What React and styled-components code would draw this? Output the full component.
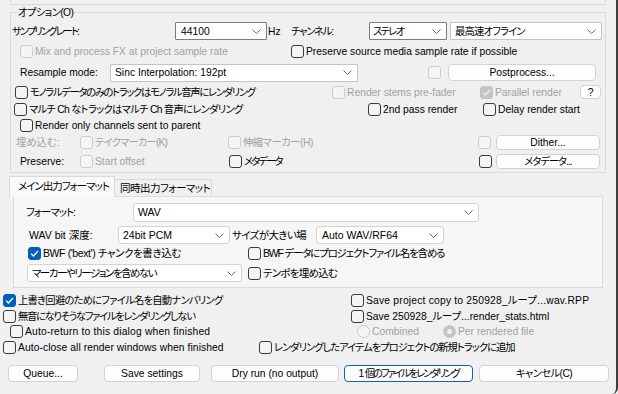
import React from "react";
import styled, { createGlobalStyle, css } from "styled-components";

const GlobalStyle = createGlobalStyle`
  html, body {
    margin: 0;
    padding: 0;
    background: #f0f0f0;
  }
  * {
    box-sizing: border-box;
  }
`;

const reaperFont = css`
  font-family: "Liberation Sans", "Noto Sans CJK JP", sans-serif;
  font-size: 10.3px;
  line-height: 13px;
`;

const winFont = css`
  font-family: "Liberation Sans", "Noto Sans CJK JP", sans-serif;
  font-size: 10.5px;
  line-height: 13px;
`;

const spacing = css`
  letter-spacing: ${(p) => p.$ls || 0}px;
`;

const Window = styled.div`
  ${reaperFont};
  font-feature-settings: "palt";
  width: 618px;
  height: 394px;
  background: #f0f0f0;
  color: #000;
  border-right: 2px solid #3d3d3d;
  border-bottom-right-radius: 6px;
  overflow: hidden;
`;

const TopStrip = styled.div`
  margin-left: 10px;
  width: 596px;
  height: 5px;
  border: 1px solid #dadada;
  border-top: none;
`;

const Group = styled.div`
  position: relative;
  margin: 7px 0 0 10px;
  width: 596px;
  border: 1px solid #dadada;
  padding: 8px 0 2px 0;
`;

const Legend = styled.div`
  position: absolute;
  top: -7px;
  left: 6px;
  padding: 0 1px;
  background: #f0f0f0;
  letter-spacing: -0.6px;
`;

const Row = styled.div`
  display: flex;
  align-items: center;
  height: ${(p) => p.$h}px;
  padding-left: ${(p) => p.$pl || 0}px;
  margin-top: ${(p) => p.$mt || 0}px;
`;

const Text = styled.div`
  ${spacing};
  flex: none;
  width: ${(p) => (p.$w ? `${p.$w}px` : "auto")};
  padding-left: ${(p) => p.$pl || 0}px;
  color: ${(p) => (p.$disabled ? "#a2a2a2" : "#000")};
  white-space: nowrap;
`;

const Spacer = styled.div`
  flex: none;
  width: ${(p) => p.$w}px;
`;

const CheckRow = styled.div`
  flex: none;
  display: flex;
  align-items: center;
  gap: 2px;
  width: ${(p) => (p.$w ? `${p.$w}px` : "auto")};
  color: ${(p) => (p.$disabled ? "#a2a2a2" : "#000")};
  white-space: nowrap;

  span:last-child {
    ${spacing};
  }
`;

const Box = styled.span`
  flex: none;
  width: 13px;
  height: 13px;
  border-radius: 3px;
  display: flex;
  align-items: center;
  justify-content: center;
  border: 1px solid
    ${(p) =>
      p.$checked
        ? p.$disabled
          ? "#c4c4c4"
          : "#005fb8"
        : p.$disabled
          ? "#cbcbcb"
          : "#3a3a3a"};
  background: ${(p) =>
    p.$checked ? (p.$disabled ? "#c4c4c4" : "#005fb8") : p.$disabled ? "#f5f5f5" : "#f4f4f4"};
`;

const RadioDot = styled.span`
  flex: none;
  width: 13px;
  height: 13px;
  border-radius: 50%;
  display: flex;
  align-items: center;
  justify-content: center;
  border: 1px solid #c8c8c8;
  background: ${(p) => (p.$checked ? "#c4c4c4" : "#f5f5f5")};

  &::after {
    content: "";
    display: ${(p) => (p.$checked ? "block" : "none")};
    width: 5px;
    height: 5px;
    border-radius: 50%;
    background: #eeeeee;
  }
`;

const ComboBox = styled.div`
  flex: none;
  width: ${(p) => p.$w}px;
  height: ${(p) => p.$h || 18}px;
  display: flex;
  align-items: center;
  justify-content: space-between;
  padding: 0 5px 0 ${(p) => p.$pl || 4}px;
  background: #fff;
  border: 1px solid ${(p) => (p.$dark ? "#7c7c7c" : p.$win ? "#d3d3d3" : "#c4c4c4")};
  border-radius: ${(p) => (p.$win ? 3 : 1)}px;
  white-space: nowrap;

  span {
    ${spacing};
  }
`;

const Button = styled.button`
  ${spacing};
  flex: none;
  width: ${(p) => p.$w}px;
  height: ${(p) => p.$h || 17}px;
  margin: 0;
  padding: 0;
  font: inherit;
  color: #000;
  background: #fdfdfd;
  border: 1px solid ${(p) => (p.$primary ? "#0a62bd" : "#d2d2d2")};
  border-radius: 4px;
  white-space: pre;
`;

const TabBar = styled.div`
  ${winFont};
  display: flex;
  align-items: flex-end;
  height: 20px;
  margin-top: 3px;
  padding-left: 9px;
`;

const Tab = styled.div`
  ${spacing};
  position: relative;
  z-index: 1;
  flex: none;
  width: ${(p) => p.$w}px;
  height: ${(p) => (p.$active ? 21 : 17)}px;
  margin-bottom: ${(p) => (p.$active ? -1 : 0)}px;
  padding: ${(p) => (p.$active ? "3px 0 0 8px" : "2px 0 0 5px")};
  background: ${(p) => (p.$active ? "#f9f9f9" : "#f0f0f0")};
  border: 1px solid #d9d9d9;
  border-left: ${(p) => (p.$active ? "1px solid #d9d9d9" : "none")};
  border-bottom: none;
  white-space: nowrap;
`;

const Panel = styled.div`
  ${winFont};
  margin-left: 13px;
  width: 590px;
  background: #f6f6f6;
  border: 1px solid #dcdcdc;
  padding: 6px 0 5px 0;
`;

function Chevron() {
  return (
    <svg width="9" height="5" viewBox="0 0 9 5">
      <polyline points="0.5,0.5 4.5,4.5 8.5,0.5" fill="none" stroke="#6b6b6b" strokeWidth="1" />
    </svg>
  );
}

function Tick({ color = "#fff" }) {
  return (
    <svg width="9" height="7" viewBox="0 0 9 7">
      <polyline points="1,3.6 3.4,6 8,1" fill="none" stroke={color} strokeWidth="1.3" />
    </svg>
  );
}

function Check({ w, ls, checked, disabled, children }) {
  return (
    <CheckRow $w={w} $ls={ls} $disabled={disabled}>
      <Box $checked={checked} $disabled={disabled}>
        {checked && <Tick color={disabled ? "#eeeeee" : "#fff"} />}
      </Box>
      {children && <span>{children}</span>}
    </CheckRow>
  );
}

function Radio({ w, checked, children }) {
  return (
    <CheckRow $w={w} $disabled>
      <RadioDot $checked={checked} />
      <span>{children}</span>
    </CheckRow>
  );
}

function Combo({ w, h, pl, ls, dark, win, children }) {
  return (
    <ComboBox $w={w} $h={h} $pl={pl} $ls={ls} $dark={dark} $win={win}>
      <span>{children}</span>
      <Chevron />
    </ComboBox>
  );
}

export default function App() {
  return (
    <Window>
      <GlobalStyle />
      <TopStrip />

      <Group>
        <Legend>オプション(O)</Legend>

        <Row $h={20} $pl={1}>
          <Text $w={163} $ls={-1.9}>サンプリングレート:</Text>
          <Combo w={92} dark pl={5}>44100</Combo>
          <Text $w={22} $pl={1}>Hz</Text>
          <Text $w={80} $pl={2} $ls={-1.2}>チャンネル:</Text>
          <Combo w={78} dark pl={3} ls={-1.7}>ステレオ</Combo>
          <Spacer $w={3} />
          <Combo w={152} ls={-0.8}>最高速オフライン</Combo>
        </Row>

        <Row $h={21} $pl={9}>
          <Check w={271} disabled>Mix and process FX at project sample rate</Check>
          <Check>Preserve source media sample rate if possible</Check>
        </Row>

        <Row $h={21} $pl={9}>
          <Text $w={90}>Resample mode:</Text>
          <Combo w={248}>Sinc Interpolation: 192pt</Combo>
          <Spacer $w={70} />
          <Check disabled />
          <Spacer $w={7} />
          <Button $w={148}>Postprocess...</Button>
        </Row>

        <Row $h={18} $pl={4}>
          <Check w={317} ls={-1.3}>モノラルデータのみのトラックはモノラル音声にレンダリング</Check>
          <Check w={148} disabled>Render stems pre-fader</Check>
          <Check w={100} disabled checked>Parallel render</Check>
          <Button $w={21} $h={14}>?</Button>
        </Row>

        <Row $h={16} $pl={3}>
          <Check w={354} ls={-0.7}>マルチ Ch なトラックはマルチ Ch 音声にレンダリング</Check>
          <Check w={115}>2nd pass render</Check>
          <Check>Delay render start</Check>
        </Row>

        <Row $h={16} $pl={9}>
          <Check>Render only channels sent to parent</Check>
        </Row>

        <Row $h={19} $pl={5}>
          <Text $w={64} $disabled>埋め込む:</Text>
          <Check w={148} disabled ls={-0.8}>テイクマーカー(K)</Check>
          <Check w={250} disabled ls={-0.45}>伸縮マーカー(H)</Check>
          <Check disabled />
          <Spacer $w={5} />
          <Button $w={104} $h={15}>Dither...</Button>
        </Row>

        <Row $h={18} $pl={9}>
          <Text $w={60}>Preserve:</Text>
          <Check w={149} disabled>Start offset</Check>
          <Check w={250} ls={-1.8}>メタデータ</Check>
          <Check />
          <Spacer $w={4} />
          <Button $w={104} $h={15} $ls={-1}>メタデータ...</Button>
        </Row>
      </Group>

      <TabBar>
        <Tab $w={106} $active $ls={-1}>メイン出力フォーマット</Tab>
        <Tab $w={97} $ls={-0.5}>同時出力フォーマット</Tab>
      </TabBar>

      <Panel>
        <Row $h={19} $pl={12}>
          <Text $w={107} $ls={-1}>フォーマット:</Text>
          <Combo w={346} h={19} win>WAV</Combo>
        </Row>
        <Row $h={18} $pl={15} $mt={4}>
          <Text $w={89}>WAV bit 深度:</Text>
          <Combo w={112} win>24bit PCM</Combo>
          <Text $w={86} $pl={2} $ls={-0.6}>サイズが大きい場</Text>
          <Combo w={128} win pl={5}>Auto WAV/RF64</Combo>
        </Row>
        <Row $h={19} $pl={14}>
          <Check w={220} checked ls={-0.4}>BWF ('bext') チャンクを書き込む</Check>
          <Check ls={-1.2}>BWF データにプロジェクトファイル名を含める</Check>
        </Row>
        <Row $h={18} $pl={13} $mt={1}>
          <Combo w={215} win ls={-1.5}>マーカーやリージョンを含めない</Combo>
          <Spacer $w={6} />
          <Check ls={-0.75}>テンポを埋め込む</Check>
        </Row>
      </Panel>

      <Row $h={16} $pl={3} $mt={4}>
        <Check w={348} checked ls={-0.75}>上書き回避のためにファイル名を自動ナンバリング</Check>
        <Check ls={0.2}>Save project copy to 250928_ループ...wav.RPP</Check>
      </Row>
      <Row $h={16} $pl={3}>
        <Check w={348} ls={-1.3}>無音になりそうなファイルをレンダリングしない</Check>
        <Check>Save 250928_ループ...render_stats.html</Check>
      </Row>
      <Row $h={15} $pl={10}>
        <Check w={347} ls={0.18}>Auto-return to this dialog when finished</Check>
        <Radio w={86}>Combined</Radio>
        <Radio checked>Per rendered file</Radio>
      </Row>
      <Row $h={16} $pl={3}>
        <Check w={256} ls={0.07}>Auto-close all render windows when finished</Check>
        <Check ls={-1}>レンダリングしたアイテムをプロジェクトの新規トラックに追加</Check>
      </Row>

      <Row $h={17} $pl={8} $mt={10}>
        <Button $w={70}>Queue...</Button>
        <Spacer $w={26} />
        <Button $w={96}>Save settings</Button>
        <Spacer $w={11} />
        <Button $w={128}>Dry run (no output)</Button>
        <Spacer $w={5} />
        <Button $w={129} $primary $ls={-2}>1   個のファイルをレンダリング</Button>
        <Spacer $w={6} />
        <Button $w={130} $ls={-0.6}>キャンセル(C)</Button>
      </Row>
    </Window>
  );
}
